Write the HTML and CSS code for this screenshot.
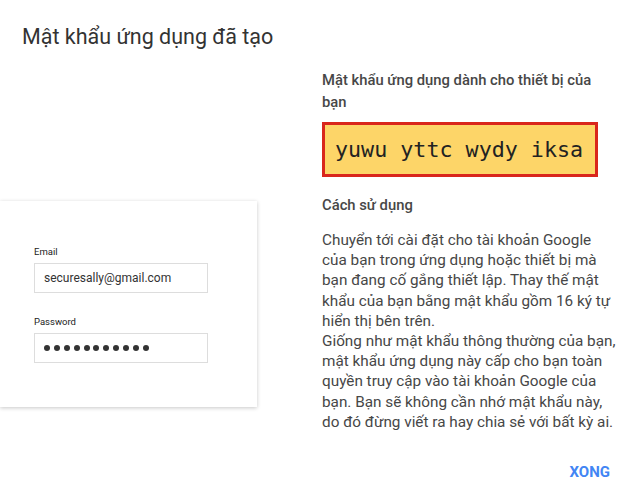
FILE: index.html
```html
<!DOCTYPE html>
<html>
<head>
  <link rel="stylesheet" href="styles.css">
</head>
<body>
  <div class="dialog">
    <h1 class="title">Mật khẩu ứng dụng đã tạo</h1>

    <div class="content">
      <div class="preview">
        <div class="card">
          <div class="field-label">Email</div>
          <div class="field">securesally@gmail.com</div>
          <div class="field-label">Password</div>
          <div class="field dots">
            <span></span><span></span><span></span><span></span>
            <span></span><span></span><span></span><span></span>
            <span></span><span></span><span></span>
          </div>
        </div>
      </div>

      <div class="info">
        <div class="subhead">Mật khẩu ứng dụng dành cho thiết bị của bạn</div>
        <div class="password">yuwu yttc wydy iksa</div>
        <div class="subhead usage">Cách sử dụng</div>
        <p class="text">
          Chuyển tới cài đặt cho tài khoản Google của bạn trong ứng dụng hoặc thiết bị mà bạn đang cố gắng thiết lập. Thay thế mật khẩu của bạn bằng mật khẩu gồm 16 ký tự hiển thị bên trên.<br>
          Giống như mật khẩu thông thường của bạn, mật khẩu ứng dụng này cấp cho bạn toàn quyền truy cập vào tài khoản Google của bạn. Bạn sẽ không cần nhớ mật khẩu này, do đó đừng viết ra hay chia sẻ với bất kỳ ai.
        </p>
      </div>
    </div>

    <div class="actions">
      <div class="done">XONG</div>
    </div>
  </div>
</body>
</html>
```

FILE: styles.css
```css
:root {
  --text: #3c3c3c;
  --muted: #474747;
  --accent: #4285f4;
  --yellow: #fdd568;
  --red: #d9261c;
}

* {
  margin: 0;
  padding: 0;
  box-sizing: border-box;
}

body {
  background: #fff;
  color: var(--text);
  font-family: Roboto, 'Noto Sans', sans-serif;
  width: 642px;
  height: 500px;
  overflow: hidden;
}

.dialog {
  padding-top: 24px;
}

.title {
  font-size: 21.5px;
  font-weight: 400;
  line-height: 26px;
  color: #333;
  padding-left: 22px;
}

.content {
  display: flex;
  margin-top: 16px;
}

.preview {
  width: 322px;
  flex-shrink: 0;
}

.card {
  width: 257px;
  height: 206px;
  margin-top: 135px;
  background: #fff;
  box-shadow: 0 1px 4px rgba(0, 0, 0, 0.22);
  padding: 45px 0 0 34px;
}

.field-label {
  font-size: 9.5px;
  line-height: 12px;
  color: #222;
  margin-bottom: 5px;
}

.field {
  width: 174px;
  height: 30px;
  border: 1px solid #ddd;
  font-size: 12px;
  color: #333;
  padding-left: 9px;
  display: flex;
  align-items: center;
  margin-bottom: 23px;
}

.dots {
  gap: 3.9px;
}

.dots span {
  width: 6px;
  height: 6px;
  border-radius: 50%;
  background: #333;
}

.info {
  width: 296px;
  padding-top: 3px;
}

.subhead {
  font-size: 14.8px;
  font-weight: 500;
  line-height: 22px;
  color: var(--muted);
}

.password {
  margin-top: 9px;
  width: 276px;
  height: 55px;
  border: 3px solid var(--red);
  background: var(--yellow);
  font-family: 'DejaVu Sans Mono', monospace;
  font-size: 21.7px;
  color: #222;
  display: flex;
  align-items: center;
  padding-left: 10px;
}

.usage {
  margin-top: 17px;
}

.text {
  margin-top: 14px;
  font-size: 15.3px;
  line-height: 20.2px;
  color: var(--muted);
}

.actions {
  display: flex;
  justify-content: flex-end;
  padding-right: 24px;
  margin-top: 28px;
}

.done {
  font-size: 15px;
  font-weight: 700;
  color: var(--accent);
  padding: 4px 8px;
  line-height: 16px;
}
```
